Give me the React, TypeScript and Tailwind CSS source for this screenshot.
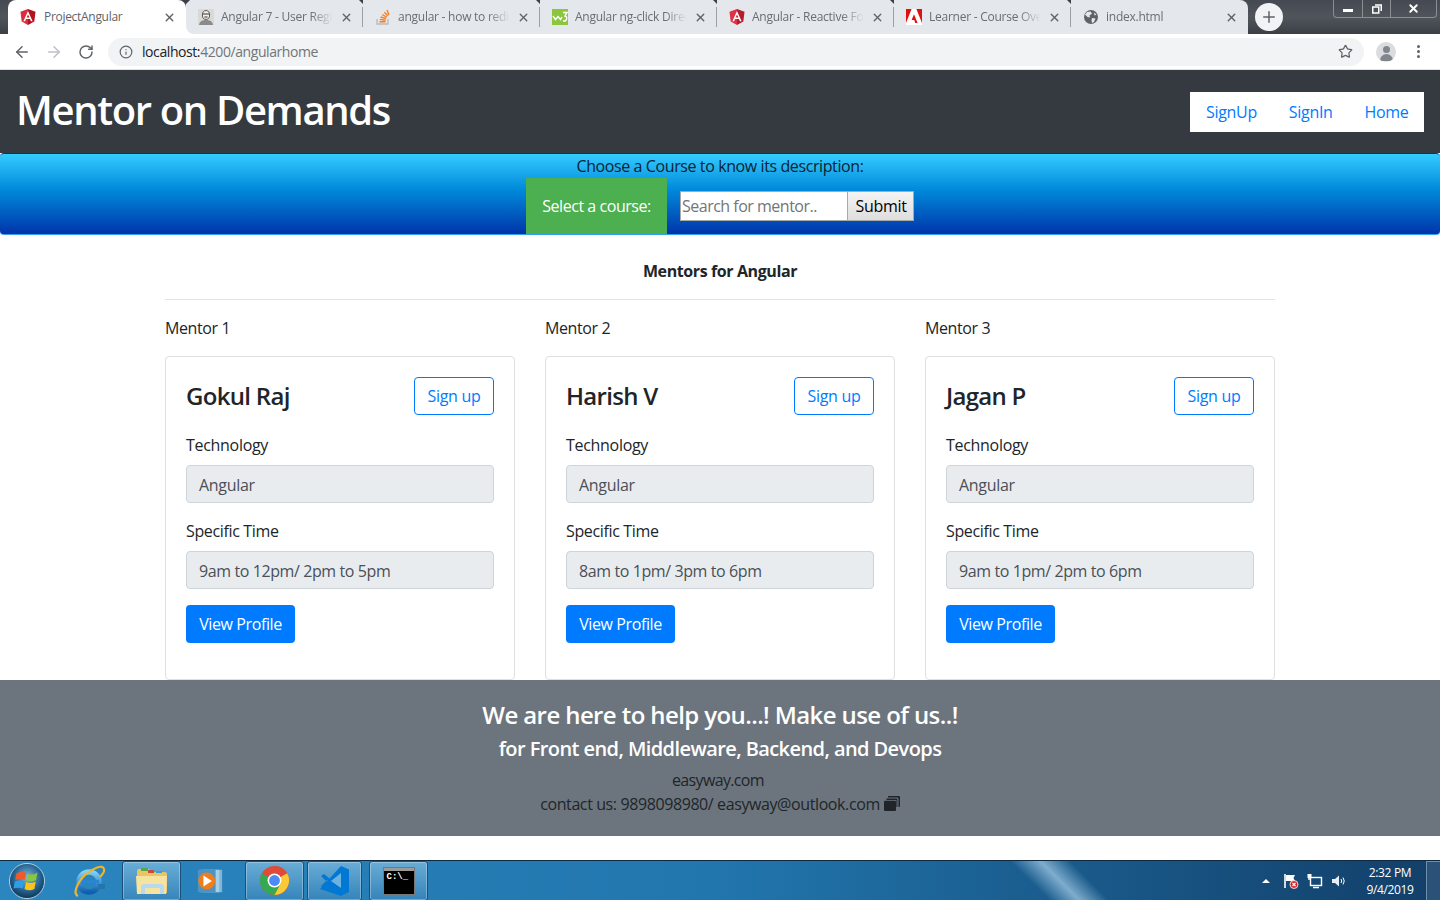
import { ArrowLeft, ArrowRight, RotateCw, Info, Star, X, Plus } from 'lucide-react';

const font = "font-['Open_Sans','Noto_Sans',sans-serif]";

function AngularIcon({ dim }: { dim?: boolean }) {
  return (
    <svg viewBox="0 0 16 16" className="w-4 h-4 shrink-0">
      <path d="M8 0 L15.5 2.7 L14.3 12.6 L8 16 Z" fill={dim ? '#b71c2c' : '#b3121f'} />
      <path d="M8 0 L.5 2.7 L1.7 12.6 L8 16 Z" fill={dim ? '#dd3345' : '#dd2c3c'} />
      <path d="M8 2 L3.4 12.2 H5.1 L6 9.9 H10 L10.9 12.2 H12.6 Z M8 5.6 L9.4 8.6 H6.6 Z" fill="#fff" fillRule="evenodd" />
    </svg>
  );
}

function AvatarIcon() {
  return (
    <svg viewBox="0 0 16 16" className="w-4 h-4 shrink-0">
      <rect width="16" height="16" fill="#d9d9d6" />
      <ellipse cx="8" cy="6" rx="3.6" ry="4.4" fill="#f3f1ee" stroke="#555" strokeWidth="1" />
      <path d="M1 16 C2 11.5 5 11 8 11 C11 11 14 11.5 15 16 Z" fill="#8a8a88" />
      <path d="M5 5 H11 M6.4 8 H9.6" stroke="#333" strokeWidth="1" />
    </svg>
  );
}

function StackIcon() {
  return (
    <svg viewBox="0 0 16 16" className="w-4 h-4 shrink-0" fill="none">
      <path d="M2 10 V15 H13 V10" stroke="#bcbbbb" strokeWidth="1.4" />
      <path d="M4.5 12.7 H10.5 M4.8 10.4 L10.6 11.2 M5.6 8 L11 9.7 M7.2 5.5 L11.9 8.3 M9.4 3.2 L13 7 M12 1 L14 6" stroke="#f48024" strokeWidth="1.4" />
    </svg>
  );
}

function W3Icon() {
  return (
    <svg viewBox="0 0 16 16" className="w-4 h-4 shrink-0">
      <rect width="16" height="16" fill="#8cc63f" />
      <path d="M1 7 L3.5 10.5 L6 7.5 L8.5 10.5 L10 8" stroke="#fff" strokeWidth="1.4" fill="none" />
      <path d="M11 3.5 H15 L13 7 C15.5 7.2 15.5 12.5 11 12" stroke="#fff" strokeWidth="1.4" fill="none" />
    </svg>
  );
}

function AdobeIcon() {
  return (
    <svg viewBox="0 0 16 16" className="w-4 h-4 shrink-0">
      <rect width="16" height="16" fill="#fff" />
      <path d="M0 0 H5.6 L0 14 Z M16 0 H10.4 L16 14 Z" fill="#e01010" />
      <path d="M8 5.2 L11.6 14 H9.3 L8.2 11.1 H5.6 Z" fill="#e01010" />
    </svg>
  );
}

function GlobeIcon() {
  return (
    <svg viewBox="0 0 16 16" className="w-4 h-4 shrink-0">
      <circle cx="8" cy="8" r="7" fill="#5f6368" />
      <path d="M4 3 L7.5 2.5 L9 4.5 L6.5 6.5 L7 8.5 L4.5 8 L2 5.5 Z M9 9 L12.5 9.5 L11 13 L9 14 L8.5 11.5 Z M11 3.5 L13.5 5.5 L11.5 6.5 Z" fill="#e4e7eb" />
    </svg>
  );
}

const tabs = [
  { title: 'Angular 7 - User Registration', icon: <AvatarIcon /> },
  { title: 'angular - how to redirect', icon: <StackIcon /> },
  { title: 'Angular ng-click Directive', icon: <W3Icon /> },
  { title: 'Angular - Reactive Forms', icon: <AngularIcon dim /> },
  { title: 'Learner - Course Overview', icon: <AdobeIcon /> },
  { title: 'index.html', icon: <GlobeIcon /> },
];

function TabBar() {
  return (
    <div className="flex items-stretch h-[34px] pl-[8px] bg-gradient-to-b from-[#454a52] via-[#50555c] to-[#3b4047] relative">
      <div className="flex items-center w-[178px] bg-white rounded-t-lg pl-[12px] pr-[10px]">
        <AngularIcon />
        <span className="ml-[8px] text-[12px] text-[#5f6368] flex-1 whitespace-nowrap tracking-[-0.3px]">ProjectAngular</span>
        <X size={13} strokeWidth={2.5} className="text-[#5f6368]" />
      </div>
      {tabs.map((t, i) => (
        <div key={t.title} className={`w-[177px] relative ${i === 0 ? 'bg-white' : ''} ${i === 5 ? 'rounded-tr-lg' : ''}`}>
          <div className={`flex items-center h-full bg-[#e4e7eb] pl-[12px] pr-[10px] ${i === 0 ? 'rounded-bl-lg' : ''} ${i === 5 ? 'rounded-tr-lg' : ''}`}>
            {t.icon}
            <span className="ml-[7px] w-[112px] overflow-hidden text-[12px] text-[#6a6e73] whitespace-nowrap tracking-[-0.25px] mask-r-from-80%">{t.title}</span>
            <X size={13} strokeWidth={2.5} className="text-[#5f6368] ml-auto" />
          </div>
          {i < 5 && <div className="absolute right-0 top-[7px] w-px h-[20px] bg-[#9aa0a6]" />}
          {i < 5 && <div className="absolute -right-[4px] top-0 w-0 h-0 border-x-[4px] border-x-transparent border-t-[4px] border-t-[#3b4047]" />}
        </div>
      ))}
      <div className="absolute left-[182px] top-0 w-0 h-0 border-x-[4px] border-x-transparent border-t-[4px] border-t-[#3b4047]" />
      <div className="ml-[7px] mt-[3px] w-[28px] h-[28px] rounded-full bg-[#f1f3f4] flex items-center justify-center">
        <Plus size={18} strokeWidth={2} className="text-[#5f6368]" />
      </div>
      {/* window buttons */}
      <div className="absolute right-[3px] top-0 w-[104px] h-[18px] border border-t-0 border-[#8b8f94] rounded-b-[4px] flex items-stretch">
        <div className="w-[29px] flex items-center justify-center border-r border-[#8b8f94]">
          <div className="w-[10px] h-[3px] mt-[3px] bg-white" />
        </div>
        <div className="w-[28px] flex items-center justify-center border-r border-[#8b8f94]">
          <svg viewBox="0 0 10 10" className="w-[10px] h-[10px]" fill="none" stroke="#fff">
            <rect x="0.75" y="3" width="6" height="6" strokeWidth="1.5" />
            <path d="M3 1 H9.25 V7" strokeWidth="1.5" />
          </svg>
        </div>
        <div className="flex-1 flex items-center justify-center">
          <X size={13} strokeWidth={3.5} className="text-white" />
        </div>
      </div>
    </div>
  );
}

function AddressBar() {
  return (
    <div className="flex items-center h-[36px] bg-white pl-[13px] pr-[14px] border-b border-[#e0e0e0]">
      <ArrowLeft size={18} strokeWidth={2} className="text-[#5f6368]" />
      <ArrowRight size={18} strokeWidth={2} className="text-[#bdc1c6] ml-[14px]" />
      <RotateCw size={16} strokeWidth={2.2} className="text-[#5f6368] ml-[15px]" />
      <div className="ml-[14px] flex items-center w-[1256px] h-[28px] rounded-full bg-[#f1f3f4] pl-[11px] pr-[11px]">
        <Info size={14} strokeWidth={2} className="text-[#5f6368]" />
        <span className="ml-[9px] text-[14px] text-[#70757a] tracking-[-0.42px]">
          <span className="text-[#202124]">localhost:</span>4200/angularhome
        </span>
        <Star size={15} strokeWidth={2} className="text-[#5f6368] ml-auto" />
      </div>
      <div className="ml-[12px] w-[20px] h-[20px] rounded-full bg-[#dadce0] overflow-hidden flex flex-col items-center">
        <div className="w-[7px] h-[7px] mt-[4px] rounded-full bg-[#80868b]" />
        <div className="w-[13px] h-[7px] mt-[1px] rounded-t-full bg-[#80868b]" />
      </div>
      <div className="ml-[21px] flex flex-col gap-[2px]">
        <div className="w-[3px] h-[3px] rounded-full bg-[#5f6368]" />
        <div className="w-[3px] h-[3px] rounded-full bg-[#5f6368]" />
        <div className="w-[3px] h-[3px] rounded-full bg-[#5f6368]" />
      </div>
    </div>
  );
}

function SiteNav() {
  return (
    <nav className="flex items-center justify-between h-[83px] bg-[#343a40] pl-[16px] pr-[16px]">
      <h1 className="text-[40px] font-semibold text-white leading-[48px] -mt-[4px] tracking-[-1.35px]">Mentor on Demands</h1>
      <div className="flex items-center gap-[32px] w-[234px] h-[40px] bg-white pl-[16px] text-[16px] text-[#007bff] tracking-[-0.32px]">
        <span>SignUp</span>
        <span>SignIn</span>
        <span>Home</span>
      </div>
    </nav>
  );
}

function CourseBar() {
  return (
    <div className="h-[82px] rounded-[4px] border-y border-t-[#0b2a9e] border-b-[#33a0ee] bg-gradient-to-b from-[#33ccff] to-[#0033aa] flex flex-col items-center">
      <p className="text-[16px] leading-[24px] text-[#0b1f33] tracking-[-0.4px]">Choose a Course to know its description:</p>
      <div className="flex items-center">
        <div className="w-[141px] h-[56px] bg-[#4caf50] text-white text-[16px] flex items-center justify-center tracking-[-0.45px]">
          Select a course:
        </div>
        <div className="ml-[13px] w-[168px] h-[30px] bg-white border border-[#a9a9a9] flex items-center pl-[1px] text-[16px] text-[#757575] tracking-[-0.5px]">
          Search for mentor..
        </div>
        <div className="w-[66px] h-[30px] bg-gradient-to-b from-[#f4f4f4] to-[#dedede] border border-[#a9a9a9] border-l-0 pl-[1px] flex items-center justify-center text-[16px] text-black tracking-[-0.3px]">
          Submit
        </div>
      </div>
    </div>
  );
}

const mentors = [
  { n: 'Mentor 1', name: 'Gokul Raj', time: '9am to 12pm/ 2pm to 5pm' },
  { n: 'Mentor 2', name: 'Harish V', time: '8am to 1pm/ 3pm to 6pm' },
  { n: 'Mentor 3', name: 'Jagan P', time: '9am to 1pm/ 2pm to 6pm' },
];

function MentorCard({ name, time }: { name: string; time: string }) {
  return (
    <div className="h-[324px] border border-[#dfdfdf] rounded-[4px] pt-[20px] px-[20px]">
      <div className="flex items-center justify-between h-[38px]">
        <h2 className="text-[24px] font-semibold text-[#212529] tracking-[-0.7px]">{name}</h2>
        <button className="w-[80px] h-[38px] border border-[#007bff] rounded-[4px] text-[16px] text-[#007bff] tracking-[-0.3px]">Sign up</button>
      </div>
      <p className="mt-[18px] h-[24px] leading-[24px] text-[16px] text-[#212529] tracking-[-0.3px]">Technology</p>
      <div className="mt-[8px] h-[38px] bg-[#e9ecef] border border-[#ced4da] rounded-[4px] px-[12px] pt-[1px] flex items-center text-[16px] text-[#495057] tracking-[-0.3px]">Angular</div>
      <p className="mt-[16px] h-[24px] leading-[24px] text-[16px] text-[#212529] tracking-[-0.35px]">Specific Time</p>
      <div className="mt-[8px] h-[38px] bg-[#e9ecef] border border-[#ced4da] rounded-[4px] px-[12px] pt-[1px] flex items-center text-[16px] text-[#495057] tracking-[-0.4px]">{time}</div>
      <button className="mt-[16px] w-[109px] h-[38px] bg-[#007bff] rounded-[4px] text-[16px] text-white tracking-[-0.4px]">View Profile</button>
    </div>
  );
}

function Mentors() {
  return (
    <div className="h-[445px] w-[1110px] mx-auto">
      <h3 className="mt-[24px] text-center text-[16px] leading-[24px] font-bold text-[#212529] tracking-[-0.4px]">Mentors for Angular</h3>
      <div className="mt-[16px] border-t border-[#e4e4e4]" />
      <div className="mt-[16px] grid grid-cols-3 gap-[30px]">
        {mentors.map((m) => (
          <div key={m.n}>
            <p className="h-[24px] leading-[24px] text-[16px] text-[#212529] tracking-[-0.38px]">{m.n}</p>
            <div className="mt-[16px]">
              <MentorCard name={m.name} time={m.time} />
            </div>
          </div>
        ))}
      </div>
    </div>
  );
}

function Footer() {
  return (
    <footer className="h-[156px] bg-[#6c757d] flex flex-col items-center pt-[20px]">
      <h3 className="text-[24px] leading-[32px] -mt-[1px] font-semibold text-white tracking-[-0.6px]">We are here to help you...! Make use of us..!</h3>
      <h4 className="text-[20px] leading-[28px] mt-[4px] font-semibold text-white tracking-[-0.58px]">for Front end, Middleware, Backend, and Devops</h4>
      <p className="mt-[5px] -ml-[4px] text-[16px] leading-[24px] text-[#212529] tracking-[-0.65px]">easyway.com</p>
      <p className="text-[16px] leading-[24px] text-[#212529] flex items-center tracking-[-0.4px]">
        contact us: 9898098980/ easyway@outlook.com
        <svg viewBox="0 0 16 16" className="w-4 h-4 ml-[4px]" fill="#212529">
          <path d="M4 0 H15 Q16 0 16 1 V10 Q16 11 15 11 H14.5 V3 Q14.5 1.6 13 1.6 H4 Z" />
          <path d="M2.5 2.5 H12.5 Q13.4 2.5 13.4 3.5 V11 H12.4 V4 H2.5 Z" />
          <path d="M1 4.8 H11 Q12 4.8 12 5.8 V14 Q12 15 11 15 H1 Q0 15 0 14 V5.8 Q0 4.8 1 4.8 Z" />
        </svg>
      </p>
    </footer>
  );
}

function StartOrb() {
  return (
    <svg viewBox="0 0 40 40" className="w-[38px] h-[38px]">
      <defs>
        <radialGradient id="orb" cx="50%" cy="40%" r="60%">
          <stop offset="0%" stopColor="#7fb8dc" />
          <stop offset="65%" stopColor="#23618f" />
          <stop offset="100%" stopColor="#0e3554" />
        </radialGradient>
      </defs>
      <circle cx="20" cy="20" r="18.5" fill="url(#orb)" stroke="#b8d3e6" strokeWidth="1" />
      <path d="M9 12 Q14 9 19 11.5 L17.6 19 Q13 17 7.6 19 Z" fill="#ef5a2a" />
      <path d="M20.5 12 Q25.5 15 31 11 L29.5 19 Q24.5 22 19.2 19.5 Z" fill="#8cc63f" />
      <path d="M7.2 20.5 Q12 18.5 17 20.5 L15.6 28 Q10.5 26 5.8 28 Z" fill="#2e9fe6" />
      <path d="M19 21 Q24 23.5 29.2 20.5 L27.8 28.5 Q22.5 31 17.4 28.5 Z" fill="#fcc419" />
    </svg>
  );
}

function IEIcon() {
  return (
    <svg viewBox="0 0 34 34" className="w-[34px] h-[34px]" fill="none">
      <defs>
        <linearGradient id="ie" x1="0" y1="0" x2="0" y2="1">
          <stop offset="0%" stopColor="#7fd0f5" />
          <stop offset="100%" stopColor="#0f5fb0" />
        </linearGradient>
      </defs>
      <circle cx="17" cy="18" r="10" stroke="url(#ie)" strokeWidth="5.5" />
      <path d="M9 17.5 H27" stroke="#2a86d0" strokeWidth="3.5" />
      <path d="M26 22.5 L33 22.5" stroke="#2176ad" strokeWidth="5" />
      <path d="M6 32 C1 30 4 20 13 11 C21 4 31 0 32 5 C33 8 30 11 28 13" stroke="#f0b429" strokeWidth="2.2" />
    </svg>
  );
}

function FolderIcon() {
  return (
    <svg viewBox="0 0 34 32" className="w-[34px] h-[32px]">
      <path d="M2 6 Q2 4 4 4 H14 L16 7 H30 Q32 7 32 9 V28 H2 Z" fill="#e9c566" />
      <rect x="6" y="3" width="7" height="3" fill="#54a848" />
      <rect x="13" y="5" width="6" height="3" fill="#c94a3c" />
      <rect x="21" y="6" width="6" height="2" fill="#3f9bd4" />
      <path d="M1 11 H32 L31 29 H2 Z" fill="#f7e3a0" />
      <path d="M6 29 V22 Q6 19 9 19 H26 Q29 19 29 22 V29 H25 V23 H10 V29 Z" fill="#b9d9ec" />
    </svg>
  );
}

function MediaIcon() {
  return (
    <svg viewBox="0 0 30 30" className="w-[28px] h-[28px]">
      <rect x="9" y="3" width="19" height="24" fill="#7fb6d8" />
      <rect x="5" y="3" width="20" height="24" fill="#a7cfe8" />
      <rect x="2" y="3" width="19" height="24" fill="#4d94c4" />
      <circle cx="11.5" cy="15" r="9" fill="#ee7d1c" />
      <path d="M8 9 L17 15 L8 21 Z" fill="#fff" />
    </svg>
  );
}

function ChromeIcon() {
  return (
    <svg viewBox="0 0 32 32" className="w-[31px] h-[31px]">
      <circle cx="16" cy="16" r="15" fill="#dd4b39" />
      <path d="M16 16 L3 8.5 A15 15 0 0 0 16 31 L23.5 19 Z" fill="#34a853" />
      <path d="M16 16 L29 8.5 A15 15 0 0 1 16 31 L23 18 Z" fill="#fcc934" />
      <path d="M16 1 A15 15 0 0 1 29 8.5 H16 Z" fill="#dd4b39" />
      <circle cx="16" cy="16" r="7.2" fill="#fff" />
      <circle cx="16" cy="16" r="5.6" fill="#4c8bf5" />
    </svg>
  );
}

function VSCodeIcon() {
  return (
    <svg viewBox="0 0 32 32" className="w-[32px] h-[32px]">
      <path d="M22 1 L30 4.5 V27 L22 31 L1 24 Z" fill="#0078d4" />
      <path d="M22 8 V23 L12 16 Z" fill="#6eb2e0" />
      <path d="M2 11 L5 9 L11 14 L8 17 Z M2 21 L5 23 L11 18 L8 15 Z" fill="#0078d4" />
    </svg>
  );
}

function CmdIcon() {
  return (
    <div className="w-[30px] h-[26px] bg-black border-t-[3px] border-[#9a9a9a] shadow-[0_0_0_1px_#777] text-white font-['Liberation_Mono',monospace] text-[9px] font-bold leading-[12px] pl-[3px] whitespace-pre">
      C:\_
    </div>
  );
}

function TaskButton({ w, ml, children }: { w: string; ml: string; children: React.ReactNode }) {
  return (
    <div className={`${w} ${ml} h-[40px] rounded-[3px] border border-[#1c4f78] bg-gradient-to-b from-[#7ab8de]/80 to-[#3a86bb]/70 shadow-[inset_0_0_0_1px_rgba(255,255,255,0.3)] flex items-center justify-center`}>
      {children}
    </div>
  );
}

function Taskbar() {
  return (
    <div className="h-[40px] bg-gradient-to-r from-[#2b86bf] via-[#2176ad] to-[#123f69] border-t border-[#0f2a40] flex items-center relative overflow-hidden">
      <div className="absolute left-[1030px] -top-[10px] w-[60px] h-[60px] bg-gradient-to-r from-transparent via-[#a9cfe8]/70 to-transparent skew-x-[45deg]" />
      <div className="ml-[8px] w-[38px] flex relative"><StartOrb /></div>
      <div className="ml-[26px] w-[34px] flex relative"><IEIcon /></div>
      <div className="relative flex items-center">
        <TaskButton w="w-[59px]" ml="ml-[16px]"><FolderIcon /></TaskButton>
        <div className="w-[64px] flex pl-[15px]"><MediaIcon /></div>
        <TaskButton w="w-[59px]" ml="ml-0"><ChromeIcon /></TaskButton>
        <TaskButton w="w-[55px]" ml="ml-[3px]"><VSCodeIcon /></TaskButton>
        <TaskButton w="w-[59px]" ml="ml-[7px]"><CmdIcon /></TaskButton>
      </div>
      <div className="relative ml-auto flex items-center h-full text-white">
        <div className="w-0 h-0 border-x-[4px] border-x-transparent border-b-[4px] border-b-white" />
        <svg viewBox="0 0 16 16" className="w-4 h-4 ml-[13px]">
          <path d="M2 1 V15" stroke="#fff" strokeWidth="1.6" />
          <path d="M3 2 H12 L10.5 5 L12 8 H3 Z" fill="#fff" />
          <circle cx="11" cy="11.5" r="4" fill="#d9262c" stroke="#fff" strokeWidth=".8" />
          <path d="M9.5 10 L12.5 13 M12.5 10 L9.5 13" stroke="#fff" strokeWidth="1.2" />
        </svg>
        <svg viewBox="0 0 16 16" className="w-4 h-4 ml-[8px]" fill="none">
          <rect x="3.5" y="4.5" width="11" height="8" stroke="#fff" strokeWidth="1.4" />
          <path d="M6 14.5 H12 M2 1 V7" stroke="#fff" strokeWidth="1.5" />
          <rect x="0.5" y="1" width="4" height="4" fill="#fff" />
        </svg>
        <svg viewBox="0 0 16 16" className="w-4 h-4 ml-[8px]" fill="none">
          <path d="M1 6 H4 L8 2.5 V13.5 L4 10 H1 Z" fill="#e8eef3" />
          <path d="M10 6 Q11.5 8 10 10 M12 4.5 Q14.5 8 12 11.5" stroke="#fff" strokeWidth="1" />
        </svg>
        <div className="w-[70px] ml-[8px] text-center text-[12px] leading-[17px] tracking-[-0.35px]">
          <div>2:32 PM</div>
          <div>9/4/2019</div>
        </div>
        <div className="ml-[1px] w-[14px] h-full border-l border-t border-[#6f8ea8] bg-white/10" />
      </div>
    </div>
  );
}

export default function App() {
  return (
    <div className={`${font} h-[900px] w-[1440px] overflow-hidden flex flex-col bg-white`}>
      <TabBar />
      <AddressBar />
      <SiteNav />
      <CourseBar />
      <Mentors />
      <Footer />
      <div className="h-[24px] bg-white" />
      <Taskbar />
    </div>
  );
}
